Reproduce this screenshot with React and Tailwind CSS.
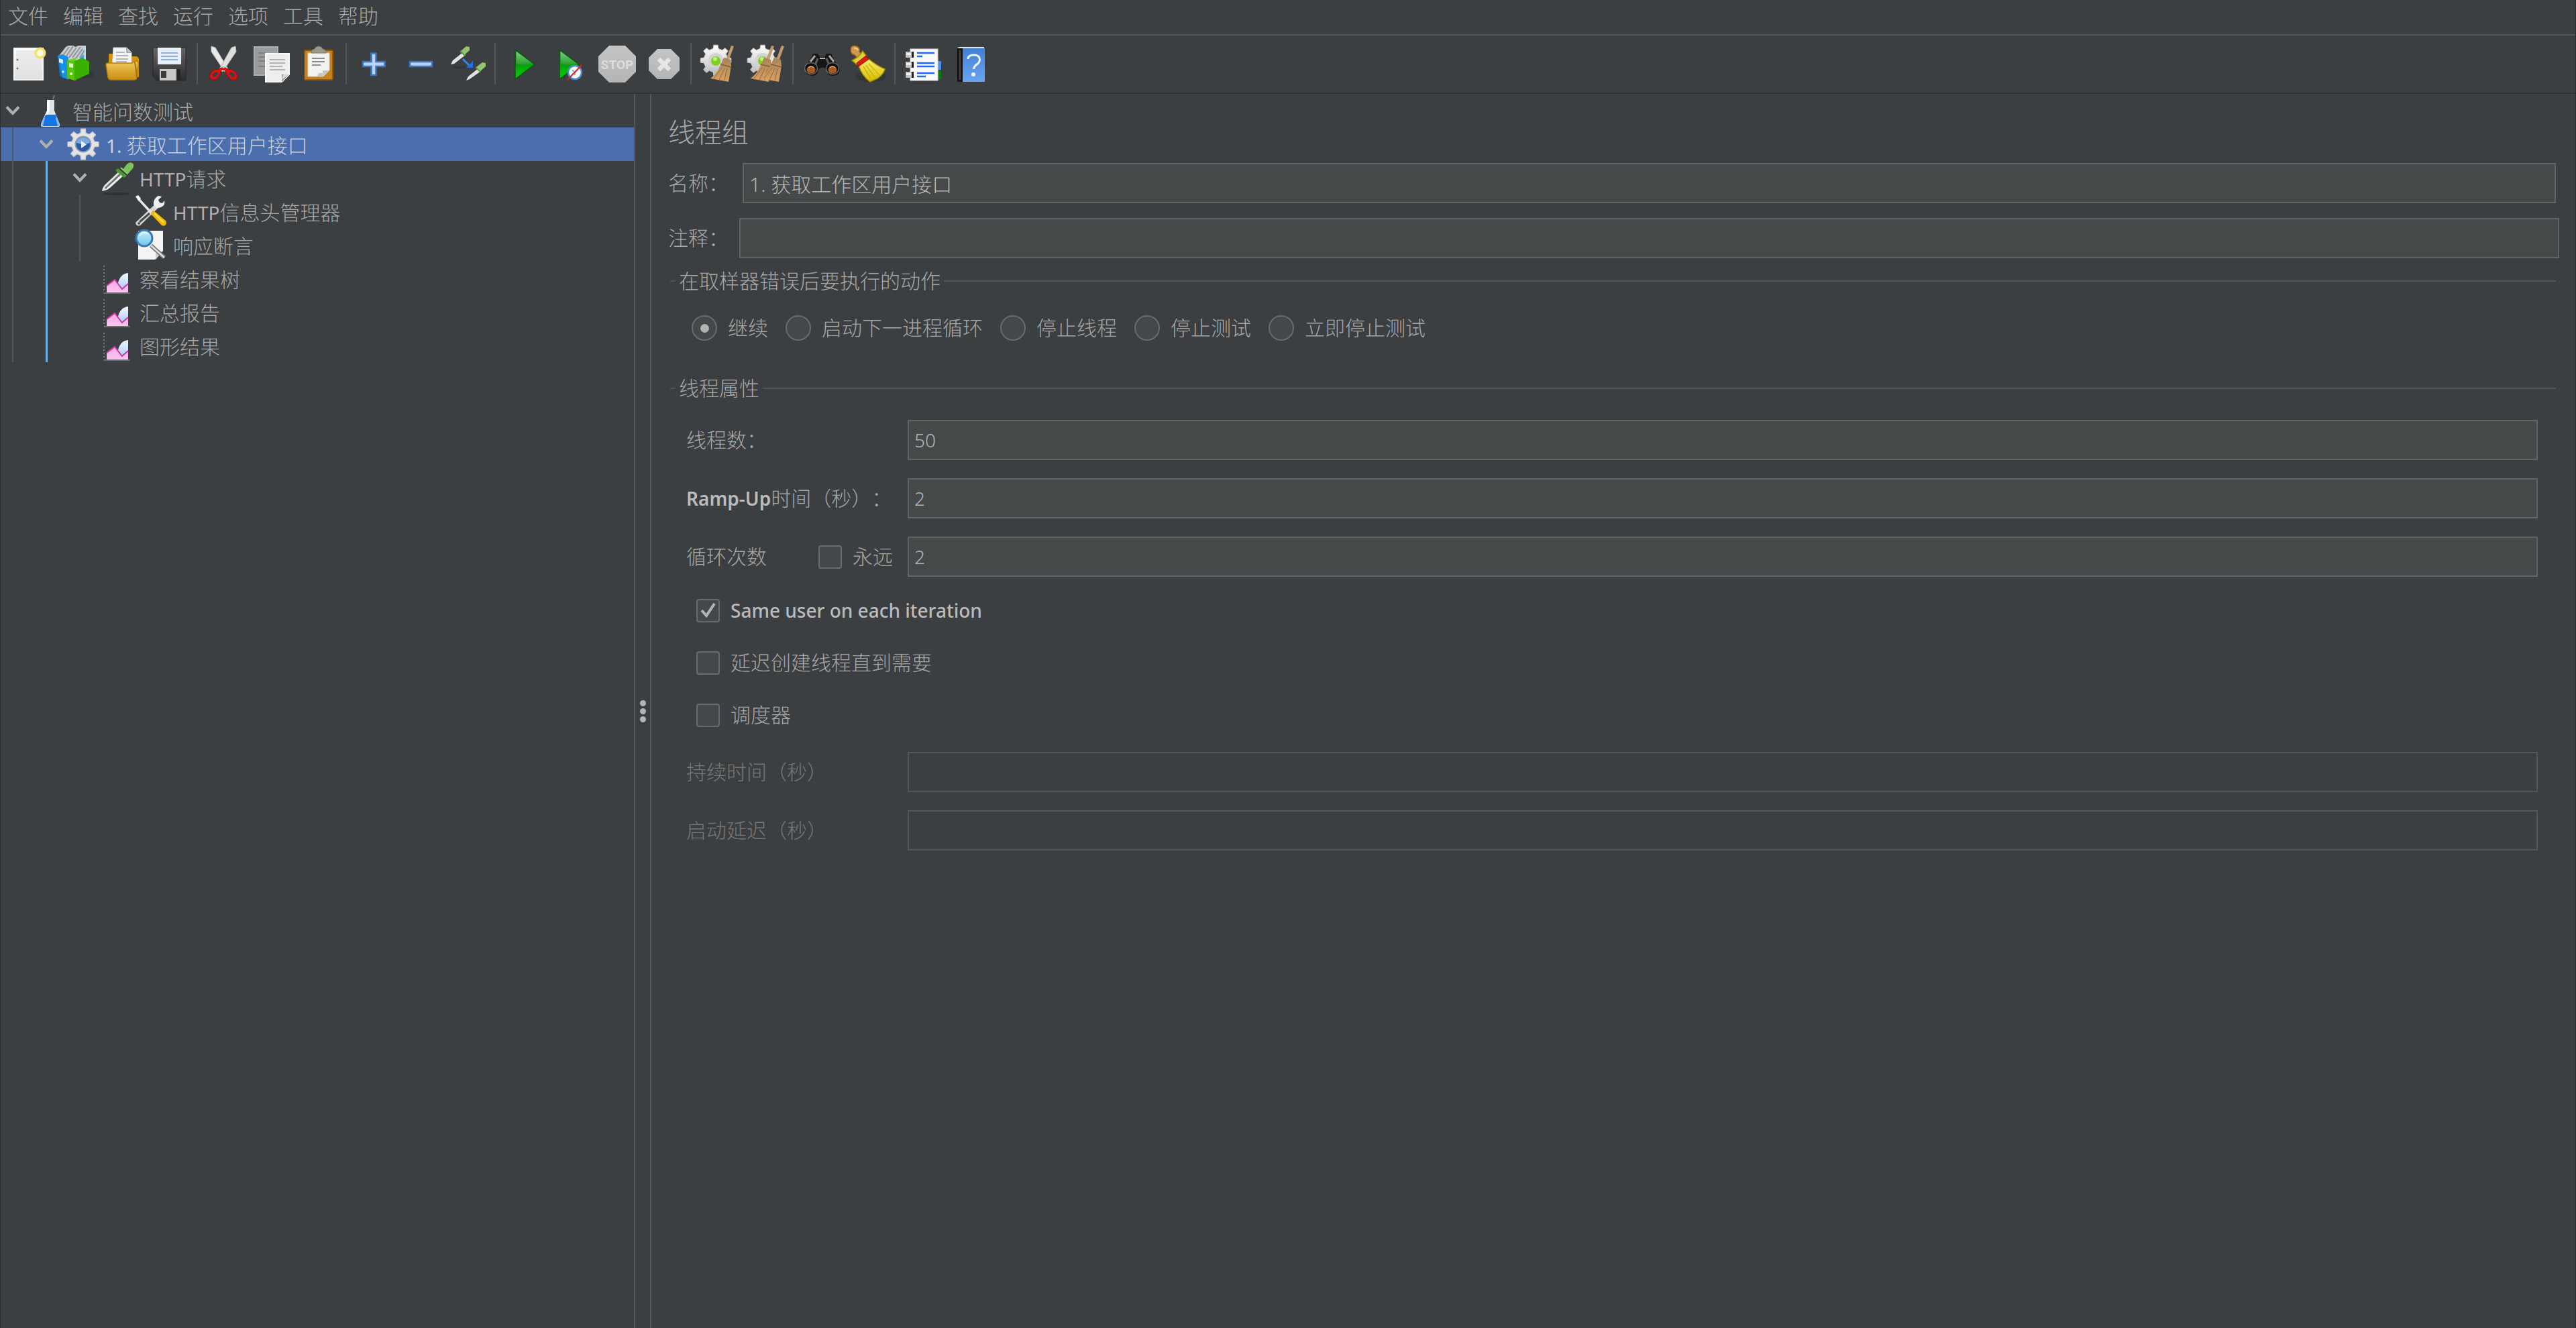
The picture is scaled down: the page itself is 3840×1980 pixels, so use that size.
import React from "react";

const polar = (cx, cy, r, a) =>
  `${(cx + r * Math.cos(a)).toFixed(1)} ${(cy + r * Math.sin(a)).toFixed(1)}`;

function gearPath(cx, cy, outer, inner, teeth = 8) {
  const step = (Math.PI * 2) / teeth;
  let d = "";
  for (let i = 0; i < teeth; i++) {
    const a = i * step - Math.PI / 2;
    d += `${i ? "L" : "M"}${polar(cx, cy, inner, a - step * 0.28)}`;
    d += `L${polar(cx, cy, outer, a - step * 0.17)}`;
    d += `L${polar(cx, cy, outer, a + step * 0.17)}`;
    d += `L${polar(cx, cy, inner, a + step * 0.28)}`;
  }
  return d + "Z";
}

function Gradients() {
  const list = [
    ["paper", "#ffffff", "#dcdcdc"],
    ["folder", "#f0c95e", "#c98f10"],
    ["disk", "#6a666b", "#2b2a2c"],
    ["play", "#0a6b12", "#00d400"],
    ["gloss", "#9be89b", "#2f9a35"],
    ["stopg", "#c4c4c4", "#b4b4b4"],
    ["bristle", "#a8835a", "#d9a260"],
    ["gold", "#f7ee6a", "#d8bc00"],
    ["blueBook", "#4380d6", "#6aa5f3"],
    ["silver", "#ffffff", "#b9b9b9"],
    ["lens", "#c9f1fb", "#6dc3e8"],
    ["pink", "#f7a9e4", "#fbc4f2"],
    ["sky", "#f2f8ff", "#9cc4fb"],
  ];
  return (
    <svg width="0" height="0" className="absolute" aria-hidden="true">
      <defs>
        {list.map(([id, a, b]) => (
          <linearGradient key={id} id={id} x1="0" y1="0" x2="0" y2="1">
            <stop offset="0" stopColor={a} />
            <stop offset="1" stopColor={b} />
          </linearGradient>
        ))}
      </defs>
    </svg>
  );
}

const NewIcon = () => (
  <>
    <rect x="6" y="5" width="43" height="47" fill="url(#paper)" stroke="#f8f8f8" strokeWidth="2" />
    <rect x="9" y="8" width="37" height="41" fill="#e4e4e6" opacity=".7" />
    <circle cx="11" cy="22" r="1.5" fill="#777" />
    <circle cx="11" cy="35" r="1.5" fill="#777" />
    <circle cx="45" cy="12" r="8.5" fill="#f0e26a" />
    <circle cx="45" cy="12" r="5" fill="#fdfbe0" />
  </>
);

const TemplatesIcon = () => (
  <>
    <ellipse cx="42" cy="44" rx="13" ry="6" fill="#333638" />
    <path d="M3 16L13 3l4-2h8l2 2 5-2h11v22L14 28z" fill="#c9cdd2" />
    <path d="M8 17L18 3M13 18L24 2M18 19L29 4M23 19L35 3M28 20L38 6M34 19L41 8" stroke="#8e959c" strokeWidth="2" />
    <path d="M34 19l6-5v9l-6-2z" fill="#3fa7dc" />
    <path d="M41 2h2v20h-2z" fill="#b8dcf2" />
    <path d="M1 16l9 3v31l-6-4z" fill="#0b74c4" />
    <path d="M1 16l7-2 9 4v34l-9-4z" fill="#1592e6" />
    <path d="M3 20l6 2v6l-6-2z" fill="#d8efff" />
    <path d="M15 23l13-4v34l-12-3z" fill="#6fd51f" />
    <path d="M26 24l12-5 10 6v18L26 53z" fill="#39b000" />
    <path d="M15 23l11 1v29l-11-4z" fill="#56c50d" />
    <path d="M18 27l6 1v6l-6-1z" fill="#e4ffd0" />
    <circle cx="21" cy="43" r="2" fill="#eaffdc" />
    <circle cx="9" cy="40" r="2" fill="#bfe4ff" />
  </>
);

const OpenIcon = () => (
  <>
    <path d="M7 13h13v4h27q5 0 5 5v26H7z" fill="#d0940f" />
    <path d="M14 4h20l7 7v24H12z" fill="#f4f4f4" stroke="#cfcfcf" />
    <path d="M34 4v7h7" fill="#c3ccd2" stroke="#8c979e" strokeWidth="1.5" />
    <path d="M18 11h13M18 16h18M18 21h18M18 25h16" stroke="#a2a2a2" strokeWidth="1.5" />
    <path d="M3 29q0-2 3-2h36l4-3q6-1 5 6l-2 18q0 4-5 4H11q-4 0-5-4z" fill="url(#folder)" stroke="#b97f0b" strokeWidth="1.5" />
    <path d="M46 25q2 12 3 24" stroke="#a8730a" strokeWidth="2" fill="none" />
  </>
);

const SaveIcon = () => (
  <>
    <path d="M4 4h48v48q0 1-2 1H9l-6-6V5z" fill="url(#disk)" stroke="#242425" />
    <rect x="10" y="4" width="35" height="25" fill="#e6effa" />
    <path d="M15 12h25M15 17h25M15 22h25" stroke="#94b0d4" strokeWidth="2" />
    <rect x="13" y="36" width="25" height="17" fill="#c8c8c8" />
    <rect x="15" y="39" width="8" height="10" fill="#3b3b3b" />
    <path d="M38 36h6v17h-6z" fill="#262626" />
  </>
);

const CutIcon = () => (
  <>
    <path d="M8 2l6 2 19 32-5 4L8 10z" fill="#e9e9e6" stroke="#bcbcb8" />
    <path d="M44 2l-6 2-18 32 5 4L45 10z" fill="#dededa" stroke="#b5b5b0" />
    <path d="M26 33l7 3q10 0 14 9 1 8-7 7-8-2-12-15h-5Q20 51 12 52q-8 0-6-8 4-8 13-8z" fill="#dd1111" stroke="#a80808" />
    <ellipse cx="14" cy="44" rx="4.5" ry="3" transform="rotate(-45 14 44)" fill="#3c3f41" />
    <ellipse cx="39" cy="44" rx="4.5" ry="3" transform="rotate(45 39 44)" fill="#3c3f41" />
    <circle cx="26" cy="33" r="1.8" fill="#c4c4c4" />
  </>
);

const CopyIcon = () => (
  <>
    <rect x="2" y="3" width="35" height="42" fill="#9a9c9d" stroke="#aeb0b1" strokeWidth="2" />
    <path d="M8 12h12M8 18h10M8 24h10M8 32h10" stroke="#7e8182" strokeWidth="2" />
    <path d="M19 13h35v31l-11 11H19z" fill="#eeeeee" stroke="#fafafa" strokeWidth="2" />
    <path d="M25 22h23M25 27h23M25 32h19M25 37h23" stroke="#b2b2b2" strokeWidth="2" />
    <path d="M54 44H43v11z" fill="#8f8f8f" />
    <path d="M54 44q-6-1-8 0t-3 8z" fill="#d9d9d9" />
  </>
);

const PasteIcon = () => (
  <>
    <rect x="7" y="8" width="42" height="44" rx="2" fill="#c58420" stroke="#94590a" strokeWidth="2" />
    <path d="M12 12h32v26l-9 9H12z" fill="#f2f2f0" stroke="#d2d2d0" />
    <path d="M44 38H34v4h-6l-2 5h9z" fill="#c7c7c5" />
    <path d="M18 20h19M18 25h19M18 30h13" stroke="#8c8c8c" strokeWidth="2" />
    <path d="M17 12q0-5 5-6 2-4 6-4t6 4q5 1 5 6z" fill="#9a998c" stroke="#7b7a6e" />
  </>
);

const PlusIcon = () => (
  <path d="M24.500 12.500h7v12.500h13v7h-13v13h-7v-13h-12.500v-7h12.500z" fill="#b9d3f2" stroke="#3d77c4" strokeWidth="2.500" />
);

const MinusIcon = () => (
  <path d="M12 25h33v7H12z" fill="#b9d3f2" stroke="#3d77c4" strokeWidth="2.500" />
);

const ToggleIcon = () => (
  <>
    <path d="M6 32h24v3H8z" fill="#333637" />
    <path d="M3 29l3-6L21 11l4 4L8 28z" fill="#e2e2e2" />
    <path d="M18 9l8-7 5 1v5l-8 7z" fill="#93c56c" />
    <path d="M17 9l7 7" stroke="#5c9a3a" strokeWidth="2" />
    <path d="M21 21l10 10" stroke="#3e7fe0" strokeWidth="3" />
    <path d="M36 23v11H25q6-3 11-11z" fill="#1f6fe8" />
    <path d="M26 53l3-6L44 35l4 4L31 51z" fill="#e2e2e2" />
    <path d="M41 33l9-7 5 1v5l-8 7z" fill="#93c56c" />
    <path d="M40 33l7 7" stroke="#5c9a3a" strokeWidth="2" />
  </>
);

const Play = () => (
  <>
    <path d="M17 7v44l29-22z" fill="url(#play)" stroke="#0b5410" strokeWidth="1.500" />
    <path d="M18.500 9.500V28q12 3 25 0z" fill="url(#gloss)" opacity=".8" />
  </>
);

const StartIcon = () => <Play />;

const StartNoPauseIcon = () => (
  <>
    <g transform="translate(-4 0)">
      <Play />
    </g>
    <circle cx="36" cy="41" r="10" fill="#f4f8fc" stroke="#4a8ad0" strokeWidth="2.500" />
    <path d="M32 37l4 4 4-4M36 41v4" stroke="#8b9299" strokeWidth="1.500" fill="none" />
    <path d="M25 52l21-22" stroke="#d22" strokeWidth="2" />
  </>
);

const StopIcon = () => (
  <>
    <path d="M17 1h24l16 16v23L41 56H17L1 40V17z" fill="url(#stopg)" />
    <text x="29" y="36" textAnchor="middle" fontFamily="Roboto" fontWeight="700" fontSize="19" fill="#dcdcdc">
      STOP
    </text>
  </>
);

const ShutdownIcon = () => (
  <>
    <path d="M19 6h20l13 13v19L39 51H19L6 38V19z" fill="url(#stopg)" />
    <path d="M21 21l16 16M37 21L21 37" stroke="#e6e6e6" strokeWidth="6.500" />
  </>
);

const Broom = () => (
  <>
    <path d="M47 1l4 1-8 22-4-2z" fill="#c09a6b" />
    <path d="M36 19l10 3 1 9-4 24-27-5q11-9 14-18z" fill="url(#bristle)" />
    <path d="M31 29l16 4" stroke="#7f5f38" strokeWidth="1.500" />
    <path d="M33 34l-12 16M37 35l-8 17M41 35l-4 18" stroke="#8f6a3e" strokeWidth="1" />
  </>
);

const BigGear = () => (
  <>
    <path d={gearPath(24, 23, 23, 18)} fill="url(#silver)" stroke="#c9c9c9" />
    <circle cx="24" cy="23" r="11" fill="#d3d3d3" />
    <circle cx="24" cy="24" r="7" fill="#7fcf1f" />
    <circle cx="23" cy="21" r="3" fill="#bff27e" />
  </>
);

const ClearIcon = () => (
  <>
    <BigGear />
    <Broom />
  </>
);

const ClearAllIcon = () => (
  <>
    <BigGear />
    <g transform="translate(-10 0)">
      <Broom />
    </g>
    <g transform="translate(5 0)">
      <Broom />
    </g>
  </>
);

const SearchIcon = () => (
  <>
    <path d="M17 13h7l3 5h7l3-5h7l3 7 9 13q3 12-9 13-9 0-10-9l-3-3h-6l-3 3q-1 9-10 9-12-1-10-13l9-13z" fill="#161616" />
    <path d="M13 25l7-9M48 25l-7-9" stroke="#a6a6a6" strokeWidth="3" />
    <path d="M24 20l-4 10M37 20l4 10" stroke="#5d5d5d" strokeWidth="3" />
    <path d="M27 20h8" stroke="#b4b4b4" strokeWidth="2" />
    <ellipse cx="14" cy="35" rx="9.500" ry="8.500" fill="#0c0c0c" stroke="#6a6a6a" strokeWidth="1.500" />
    <ellipse cx="46" cy="35" rx="9.500" ry="8.500" fill="#0c0c0c" stroke="#6a6a6a" strokeWidth="1.500" />
    <ellipse cx="14" cy="37" rx="6.500" ry="5.500" fill="#a85a22" />
    <ellipse cx="46" cy="37" rx="6.500" ry="5.500" fill="#a85a22" />
    <path d="M10 34q4-4 8 0M42 34q4-4 8 0" stroke="#e0a878" strokeWidth="1.500" fill="none" />
  </>
);

const SearchResetIcon = () => (
  <>
    <ellipse cx="33" cy="47" rx="23" ry="8" fill="#333637" />
    <path d="M4 3q6-4 11 1 2 3 1 6l3 5-6 4-4-4Q1 13 4 3z" fill="#d09a4e" stroke="#96651f" strokeWidth="1.500" />
    <path d="M8 5q4-1 6 3" stroke="#f1cb92" strokeWidth="2" fill="none" />
    <path d="M5 23q10-4 16-14l6 8-15 12z" fill="#e3cf35" stroke="#a38f00" strokeWidth="1.500" />
    <path d="M30 21q12 10 24 15-2 8-11 14l-11 5Q20 46 15 31z" fill="url(#gold)" stroke="#a79200" strokeWidth="1.500" />
    <path d="M22 32l12 20M26 30l14 20M30 28l17 18" stroke="#cdb400" strokeWidth="1.500" />
    <path d="M12 27L26 16l4 5-15 11z" fill="#d81c10" stroke="#9d0d05" />
  </>
);

const FunctionIcon = () => (
  <>
    <rect x="48" y="24" width="8" height="13" fill="#4a8fe8" />
    <rect x="48" y="38" width="8" height="13" fill="#0a7c0a" />
    <rect x="10" y="6" width="41" height="47" fill="#fafafa" stroke="#d6d6d6" />
    {[10, 25, 40].map((y) => (
      <g key={y}>
        <rect x="3" y={y} width="9" height="9" fill="#c4c4c4" />
        <rect x="4" y={y + 2} width="7" height="3" fill="#f4f4f4" />
        <rect x="12" y={y} width="3" height="9" fill="#222" />
      </g>
    ))}
    <path d="M20 12h26M20 17h8M20 27h26M20 32h26M20 42h26M20 47h13" stroke="#1f6cf2" strokeWidth="2.500" />
  </>
);

const HelpIcon = () => (
  <>
    <path d="M10 4l4-1h36v3H12z" fill="#e6e6e6" />
    <path d="M10 5h9v50h-7q-2 0-2-2z" fill="#151515" />
    <path d="M14 8v44" stroke="#444" strokeWidth="2" />
    <rect x="18" y="5" width="33" height="50" fill="url(#blueBook)" />
    <path d="M26 21q0-6 8.500-6 9 0 9 7 0 4-5 7.500-4 3-4 6.500" stroke="#f4f8ff" strokeWidth="3" fill="none" />
    <circle cx="34" cy="44" r="3" fill="#f4f8ff" />
  </>
);

const toolGroups = [
  [["新建", NewIcon], ["模板", TemplatesIcon], ["打开", OpenIcon], ["保存", SaveIcon]],
  [["剪切", CutIcon], ["复制", CopyIcon], ["粘贴", PasteIcon]],
  [["展开", PlusIcon], ["收起", MinusIcon], ["切换", ToggleIcon]],
  [["启动", StartIcon], ["不停顿开始", StartNoPauseIcon], ["停止", StopIcon], ["关闭", ShutdownIcon]],
  [["清除", ClearIcon], ["清除全部", ClearAllIcon]],
  [["查找", SearchIcon], ["重置搜索", SearchResetIcon]],
  [["函数助手", FunctionIcon], ["帮助", HelpIcon]],
];

const FlaskIcon = () => (
  <>
    <path d="M28 8l2-6" stroke="#777" strokeWidth="2" />
    <path d="M19 9h11v16l8 20q1 4-3 4H13q-4 0-3-4l9-20z" fill="#dde3e8" />
    <path d="M19 9h4v16l-8 18h-4l8-18z" fill="#ffffff" />
    <path d="M17 31h15l5 14q0 3-3 3H14q-3 0-3-3z" fill="#1176e6" />
    <path d="M10 46l4-11 2 1-3 12zM38 46l-4-11-2 1 3 12z" fill="#7db8f5" />
  </>
);

const ThreadGroupIcon = () => (
  <>
    <path d={gearPath(23, 25, 23, 17)} fill="#e4e4e4" stroke="#cfcfcf" strokeWidth="1.500" />
    <circle cx="23" cy="25" r="12.500" fill="#8c9db5" />
    <circle cx="23" cy="25" r="10.500" fill="#2c5a9e" />
    <path d="M13 23a10 8 0 0 1 20 0q-9 4-20 0z" fill="#7fa6dc" />
    <path d="M20 20v11l8-5.500z" fill="#e8eefa" />
  </>
);

const SamplerIcon = () => (
  <>
    <ellipse cx="23" cy="49" rx="19" ry="2" fill="#2e3132" />
    <path d="M1 45q1-7 6-11L26 16l7 6-20 18q-5 4-12 5z" fill="#dfe3e0" />
    <path d="M6 41L28 20" stroke="#6f7573" strokeWidth="3" />
    <path d="M8 42L30 22" stroke="#fff" strokeWidth="2" />
    <path d="M32 13l6-8q4-4 8-2t1 8l-8 9z" fill="#7cc45a" />
    <path d="M25 11l13 11-4 3-13-11z" fill="#4c9a2f" />
    <path d="M29 10l10 9" stroke="#8ed36a" strokeWidth="2" />
  </>
);

const ConfigIcon = () => (
  <>
    <path d="M3 40L35 10l5 5L8 46q-4 2-6-1t1-5z" fill="#d6d6d6" />
    <path d="M7 41L22 28" stroke="#4a4c4d" strokeWidth="3" />
    <circle cx="6" cy="43" r="1.800" fill="#3c3f41" />
    <path d="M28 15q-1-9 7-13l5 1-5 5 2 4 4 1 3-4q2 7-5 10-6 2-9 0z" fill="#efefef" />
    <path d="M5 6l22 24" stroke="#e6e6e6" strokeWidth="3.500" />
    <path d="M1 3l4-2 4 5-3 4z" fill="#fff" />
    <path d="M28 24q-4 1-4 5l16 17q4 2 6-1t0-6z" fill="#f5b800" />
    <path d="M29 28l14 14" stroke="#ffe06a" strokeWidth="2" />
  </>
);

const AssertionIcon = () => (
  <>
    <path d="M5 4h37v30L30 47H5z" fill="#f4f4f4" />
    <path d="M42 34H31v13z" fill="#d0d0d0" />
    <path d="M24 26l20 18" stroke="#7a7a7a" strokeWidth="6" />
    <path d="M24 26l20 18" stroke="#dedede" strokeWidth="2.500" />
    <circle cx="14" cy="15" r="12" fill="url(#lens)" stroke="#3b78b4" strokeWidth="3" />
    <path d="M7 12q4-7 12-4" stroke="#fff" strokeWidth="2" fill="none" opacity=".7" />
  </>
);

const ListenerIcon = () => (
  <>
    <path d="M4 6v41" stroke="#7c7c7c" strokeWidth="2" strokeDasharray="2 3" />
    <path d="M4 47h39" stroke="#6e6e6e" strokeWidth="2" />
    <path d="M24 42q0-23 16-25v29z" fill="url(#sky)" />
    <path d="M8 46V36l12-9 11 13 9-8v14z" fill="url(#pink)" />
    <path d="M8 36l12-9 11 14 9-8" stroke="#c93a9c" strokeWidth="2" fill="none" />
  </>
);

/* guides: one entry per indent column, "g" grey line, "b" blue line */
const tree = [
  { text: "智能问数测试", icon: FlaskIcon, guides: "", open: true },
  { latin: "1. ", text: "获取工作区用户接口", icon: ThreadGroupIcon, guides: "g", open: true, selected: true },
  { latin: "HTTP", text: "请求", icon: SamplerIcon, guides: "gb", open: true },
  { latin: "HTTP", text: "信息头管理器", icon: ConfigIcon, guides: "gbg" },
  { text: "响应断言", icon: AssertionIcon, guides: "gbg" },
  { text: "察看结果树", icon: ListenerIcon, guides: "gb" },
  { text: "汇总报告", icon: ListenerIcon, guides: "gb" },
  { text: "图形结果", icon: ListenerIcon, guides: "gb" },
];

function TreeRow({ latin, text, icon: Icon, guides, open, selected }) {
  return (
    <li
      role="treeitem"
      aria-selected={!!selected}
      className={`flex h-[50px] items-center ${selected ? "bg-[#4b6eaf] text-[#c8cdd6]" : ""}`}
    >
      {[...guides].map((g, i) => (
        <span key={i} className="flex h-full w-[50px] shrink-0 pl-[17px]">
          <span className={`h-full ${g === "b" ? "w-[3px] bg-[#6cb0ee]" : "w-[2px] bg-[#555657]"}`} />
        </span>
      ))}
      <span className="w-[50px] shrink-0 pl-[7px]">
        {open && (
          <svg width="22" height="16" viewBox="0 0 22 16" fill="none" className="block">
            <path d="M2 2.500l9 9.500 9-9.500" stroke="#b0b0b0" strokeWidth="4" />
          </svg>
        )}
      </span>
      <svg width="48" height="50" viewBox="0 0 48 50" fill="none" className="shrink-0 overflow-visible">
        <Icon />
      </svg>
      <span className="pt-1 pl-[9px] whitespace-pre">
        {latin && (
          <span className={`text-[28px] font-normal ${selected ? "text-[#d0d4dc]" : "text-[#b0b0b0]"}`}>{latin}</span>
        )}
        {text}
      </span>
    </li>
  );
}

function Field({ id, size = "text-[28px]", ...props }) {
  return (
    <input
      id={id}
      type="text"
      className={`h-[60px] min-w-0 flex-1 border-2 border-[#646464] bg-[#45494a] px-2 text-[#b4b4b4] outline-none disabled:border-[#555555] disabled:bg-[#3c3f41] ${size}`}
      {...props}
    />
  );
}

function Radio({ label, defaultChecked }) {
  return (
    <label className="flex items-center gap-4">
      <span className="grid place-items-center">
        <input
          type="radio"
          name="on-error"
          defaultChecked={defaultChecked}
          className="peer col-start-1 row-start-1 size-[38px] appearance-none rounded-full border-2 border-[#6b6b6b] bg-[#43494a]"
        />
        <span className="pointer-events-none col-start-1 row-start-1 hidden size-[13px] rounded-full bg-[#b4b4b4] peer-checked:block" />
      </span>
      {label}
    </label>
  );
}

function Check({ children, defaultChecked }) {
  return (
    <label className="flex h-10 items-center gap-4">
      <span className="grid place-items-center">
        <input
          type="checkbox"
          defaultChecked={defaultChecked}
          className="peer col-start-1 row-start-1 size-[35px] appearance-none rounded-[4px] border-2 border-[#6b6b6b] bg-[#43494a]"
        />
        <svg
          width="24"
          height="24"
          viewBox="0 0 24 24"
          fill="none"
          className="pointer-events-none col-start-1 row-start-1 hidden peer-checked:block"
        >
          <path d="M2 12l7 8L21 2" stroke="#b4b4b4" strokeWidth="4" />
        </svg>
      </span>
      {children}
    </label>
  );
}

const Group = ({ title, className = "", children }) => (
  <fieldset className={`mr-[5px] ml-[3px] border-t-2 border-[#555555] ${className}`}>
    <legend className="ml-2 px-[5px] leading-10">{title}</legend>
    {children}
  </fieldset>
);

const menus = ["文件", "编辑", "查找", "运行", "选项", "工具", "帮助"];

export default function App() {
  return (
    <div className="flex min-h-screen flex-col border-x border-[#2b2d2e] bg-[#3c3f41] font-['Noto_Sans','Noto_Sans_CJK_SC',sans-serif] text-[30px] leading-10 font-light text-[#a6a6a6] [text-spacing-trim:space-all]">
      <Gradients />
      <nav className="flex h-[53px] items-center gap-[22px] border-b-2 border-[#555555] px-[11px] pb-1">
        {menus.map((m) => (
          <button key={m} type="button" className="font-light">
            {m}
          </button>
        ))}
      </nav>

      <div role="toolbar" className="flex items-center border-b-2 border-[#323232] pt-[11px] pb-3 pl-[7px]">
        {toolGroups.map((group, i) => (
          <React.Fragment key={i}>
            {i > 0 && <span className="mx-[5px] h-[62px] w-[2px] bg-[#555555]" />}
            {group.map(([name, Icon]) => (
              <button key={name} type="button" aria-label={name} className="flex w-[70px] justify-center">
                <svg width="56" height="56" viewBox="0 0 56 56" fill="none" className="overflow-visible">
                  <Icon />
                </svg>
              </button>
            ))}
          </React.Fragment>
        ))}
      </div>

      <main className="grid flex-1 grid-cols-[944px_26px_minmax(0,1fr)]">
        <ul role="tree" aria-label="测试计划">
          {tree.map((row, i) => (
            <TreeRow key={i} {...row} />
          ))}
        </ul>

        <div
          role="separator"
          className="flex flex-col items-center justify-center gap-[3px] border-x-2 border-[#555555]"
        >
          <span className="size-[9px] rounded-full bg-[#b4b4b4]" />
          <span className="size-[9px] rounded-full bg-[#b4b4b4]" />
          <span className="size-[9px] rounded-full bg-[#b4b4b4]" />
        </div>

        <form className="pt-[27px] pr-6 pl-[25px]">
          <h1 className="text-[40px] leading-[60px]">线程组</h1>

          <div className="mt-4 mr-[5px] flex items-center">
            <label htmlFor="name" className="w-[111px]">名称：</label>
            <Field id="name" defaultValue="1. 获取工作区用户接口" size="text-[30px]" />
          </div>
          <div className="mt-[22px] flex items-center">
            <label htmlFor="comment" className="w-[106px]">注释：</label>
            <Field id="comment" />
          </div>

          <Group title="在取样器错误后要执行的动作" className="mt-[14px]">
            <div className="flex gap-[26px] pt-[30px] pl-8">
              <Radio label="继续" defaultChecked />
              <Radio label="启动下一进程循环" />
              <Radio label="停止线程" />
              <Radio label="停止测试" />
              <Radio label="立即停止测试" />
            </div>
          </Group>

          <Group title="线程属性" className="mt-[50px]">
            <div className="flex flex-col gap-[27px] pt-[27px] pr-[27px] pl-6">
              <div className="flex items-center">
                <label htmlFor="threads" className="w-[330px]">线程数：</label>
                <Field id="threads" defaultValue="50" />
              </div>
              <div className="flex items-center">
                <label htmlFor="ramp" className="w-[330px] whitespace-nowrap">
                  <span className="text-[28px] font-semibold text-[#bbbbbb]">Ramp-Up</span>时间（秒）：
                </label>
                <Field id="ramp" defaultValue="2" />
              </div>
              <div className="flex items-center">
                <label htmlFor="loops" className="w-[197px]">循环次数</label>
                <div className="w-[133px]">
                  <Check>永远</Check>
                </div>
                <Field id="loops" defaultValue="2" />
              </div>
            </div>
            <div className="flex flex-col gap-[38px] pt-[30px] pl-[39px]">
              <Check defaultChecked>
                <span className="text-[28px] font-medium text-[#bbbbbb]">Same user on each iteration</span>
              </Check>
              <Check>延迟创建线程直到需要</Check>
              <Check>调度器</Check>
            </div>
            <div className="flex flex-col gap-[27px] pt-[35px] pr-[27px] pl-6 text-[#777777]">
              <div className="flex items-center">
                <label htmlFor="duration" className="w-[330px]">持续时间（秒）</label>
                <Field id="duration" disabled />
              </div>
              <div className="flex items-center">
                <label htmlFor="delay" className="w-[330px]">启动延迟（秒）</label>
                <Field id="delay" disabled />
              </div>
            </div>
          </Group>
        </form>
      </main>
    </div>
  );
}
